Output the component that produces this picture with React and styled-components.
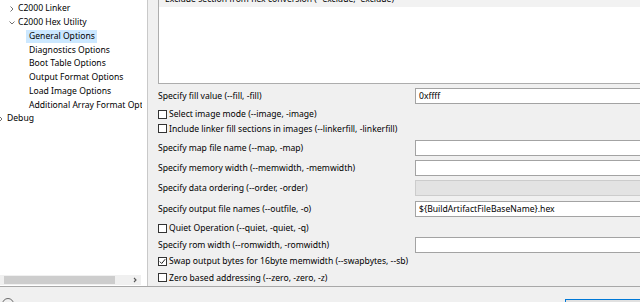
import React from "react";
import styled, { createGlobalStyle } from "styled-components";

const GlobalStyle = createGlobalStyle`
  html, body {
    margin: 0;
    padding: 0;
    background: #f0f0f0;
  }
  body {
    font-family: "Noto Sans", "Liberation Sans", sans-serif;
    font-size: 8.6px;
    color: #000;
  }
`;

const treeItems = [
  { label: "C2000 Linker", level: 1, toggle: "right" },
  { label: "C2000 Hex Utility", level: 1, toggle: "down" },
  { label: "General Options", level: 2, selected: true },
  { label: "Diagnostics Options", level: 2 },
  { label: "Boot Table Options", level: 2 },
  { label: "Output Format Options", level: 2 },
  { label: "Load Image Options", level: 2 },
  { label: "Additional Array Format Options", level: 2 },
  { label: "Debug", level: 0, toggle: "right" },
];

const formRows = [
  { kind: "field", h: 24, label: "Specify fill value (--fill, -fill)", value: "0xffff" },
  { kind: "check", h: 12, label: "Select image mode (--image, -image)" },
  { kind: "check", h: 17, label: "Include linker fill sections in images (--linkerfill, -linkerfill)" },
  { kind: "field", h: 21, label: "Specify map file name (--map, -map)", value: "" },
  { kind: "field", h: 20, label: "Specify memory width (--memwidth, -memwidth)", value: "" },
  { kind: "combo", h: 19, label: "Specify data ordering (--order, -order)" },
  { kind: "field", h: 23, label: "Specify output file names (--outfile, -o)", value: "${BuildArtifactFileBaseName}.hex" },
  { kind: "check", h: 16, label: "Quiet Operation (--quiet, -quiet, -q)" },
  { kind: "field", h: 17, label: "Specify rom width (--romwidth, -romwidth)", value: "" },
  { kind: "check", h: 16, label: "Swap output bytes for 16byte memwidth (--swapbytes, --sb)", checked: true },
  { kind: "check", h: 17, label: "Zero based addressing (--zero, -zero, -z)" },
];

const Chevron = ({ dir }) => (
  <ChevronSvg width="8" height="8" viewBox="0 0 8 8">
    {dir === "down" ? (
      <path d="M1.5 2.5 L4 5 L6.5 2.5" fill="none" stroke="#707070" strokeWidth="1" />
    ) : (
      <path d="M2.5 1.5 L5 4 L2.5 6.5" fill="none" stroke="#707070" strokeWidth="1" />
    )}
  </ChevronSvg>
);

const CheckBox = ({ checked }) => (
  <Box>
    {checked && (
      <svg width="7" height="7" viewBox="0 0 7 7">
        <path d="M0.8 3.6 L2.7 5.5 L6.2 1.2" fill="none" stroke="#222" strokeWidth="1" />
      </svg>
    )}
  </Box>
);

export default function App() {
  return (
    <>
      <GlobalStyle />
      <Window>
        <Main>
          <TreePanel>
            <TreeView>
              {treeItems.map((item) => (
                <TreeRow key={item.label} $level={item.level}>
                  <Toggle>{item.toggle && <Chevron dir={item.toggle} />}</Toggle>
                  <TreeLabel $selected={item.selected}>{item.label}</TreeLabel>
                </TreeRow>
              ))}
            </TreeView>
            <HScroll>
              <Thumb />
              <ScrollArrow>
                <svg width="6" height="6" viewBox="0 0 6 6">
                  <path d="M2 1 L4 3 L2 5" fill="none" stroke="#555" strokeWidth="1.1" />
                </svg>
              </ScrollArrow>
            </HScroll>
          </TreePanel>

          <FormPane>
            <ListBox>
              <ListHeader>
                <HeaderText>Exclude section from hex conversion (--exclude, -exclude)</HeaderText>
              </ListHeader>
            </ListBox>
            {formRows.map((row) => (
              <Row key={row.label} $h={row.h}>
                {row.kind === "check" ? (
                  <CheckLabel>
                    <CheckBox checked={row.checked} />
                    <span>{row.label}</span>
                  </CheckLabel>
                ) : (
                  <>
                    <Label>{row.label}</Label>
                    {row.kind === "combo" ? <Combo /> : <Field>{row.value}</Field>}
                  </>
                )}
              </Row>
            ))}
          </FormPane>
        </Main>

        <Footer>
          <HelpIcon width="14" height="14" viewBox="0 0 14 14">
            <circle cx="7" cy="7" r="5.5" fill="none" stroke="#6a6a6a" strokeWidth="1" />
          </HelpIcon>
          <Button />
        </Footer>
      </Window>
    </>
  );
}

const Window = styled.div`
  width: 640px;
  height: 302px;
  overflow: hidden;
  display: flex;
  flex-direction: column;
  background: #f0f0f0;
`;

const Main = styled.div`
  display: flex;
  height: 287px;
  flex-shrink: 0;
  border-bottom: 1px solid #a8a8a8;
  box-sizing: border-box;
`;

const TreePanel = styled.div`
  width: 148px;
  flex-shrink: 0;
  background: #fff;
  border-right: 1px solid #c9c9c9;
  box-sizing: border-box;
  display: flex;
  flex-direction: column;
`;

const TreeView = styled.div`
  flex: 1;
  width: 142px;
  overflow: hidden;
  padding-top: 2px;
`;

const TreeRow = styled.div`
  height: 13.75px;
  display: flex;
  align-items: center;
  padding-left: ${(p) => p.$level * 11}px;
  white-space: nowrap;
`;

const Toggle = styled.span`
  width: 7px;
  height: 8px;
  flex-shrink: 0;
  display: flex;
`;

const ChevronSvg = styled.svg`
  margin-left: -3px;
  overflow: visible;
  flex-shrink: 0;
`;

const TreeLabel = styled.span`
  margin-left: -3px;
  padding: 0 2px 0 3px;
  line-height: 13px;
  background: ${(p) => (p.$selected ? "#cce8ff" : "transparent")};
`;

const HScroll = styled.div`
  width: 141px;
  height: 10px;
  margin-bottom: 1px;
  background: #f0f0f0;
  display: flex;
  align-items: center;
`;

const Thumb = styled.div`
  width: 111px;
  height: 8px;
  margin-left: 4px;
  background: #cdcdcd;
`;

const ScrollArrow = styled.div`
  margin-left: auto;
  margin-right: 3px;
  display: flex;
`;

const FormPane = styled.div`
  flex: 1;
  min-width: 0;
  padding-left: 10px;
  display: flex;
  flex-direction: column;
`;

const ListBox = styled.div`
  height: 84px;
  flex-shrink: 0;
  background: #fff;
  border-left: 1px solid #adadad;
  border-bottom: 1px solid #adadad;
  box-sizing: border-box;
`;

const ListHeader = styled.div`
  height: 7px;
  background: #f2f2f2;
  overflow: hidden;
  padding-left: 6px;
`;

const HeaderText = styled.div`
  line-height: 12px;
  margin-top: -7px;
  white-space: nowrap;
`;

const Row = styled.div`
  height: ${(p) => p.$h}px;
  flex-shrink: 0;
  display: flex;
  align-items: center;
  white-space: nowrap;
`;

const Label = styled.span`
  width: 257px;
  flex-shrink: 0;
`;

const CheckLabel = styled.label`
  display: flex;
  align-items: center;
  gap: 2px;
`;

const Box = styled.span`
  width: 9px;
  height: 9px;
  box-sizing: border-box;
  border: 1px solid #333;
  background: #fff;
  display: flex;
  align-items: center;
  justify-content: center;
`;

const Field = styled.div`
  width: 240px;
  height: 16px;
  flex-shrink: 0;
  box-sizing: border-box;
  border: 1px solid #a3a3a3;
  background: #fff;
  padding-left: 3px;
  line-height: 14px;
`;

const Combo = styled.div`
  width: 240px;
  height: 16px;
  flex-shrink: 0;
  box-sizing: border-box;
  border: 1px solid #cccccc;
  background: #e3e3e3;
`;

const Footer = styled.div`
  flex: 1;
  display: flex;
  align-items: flex-start;
`;

const HelpIcon = styled.svg`
  margin-top: 10px;
  margin-left: 1px;
  flex-shrink: 0;
`;

const Button = styled.div`
  margin-left: auto;
  margin-right: -16px;
  margin-top: 12px;
  width: 91px;
  height: 20px;
  flex-shrink: 0;
  box-sizing: border-box;
  border: 1px solid #0078d7;
  background: #e1e1e1;
`;
